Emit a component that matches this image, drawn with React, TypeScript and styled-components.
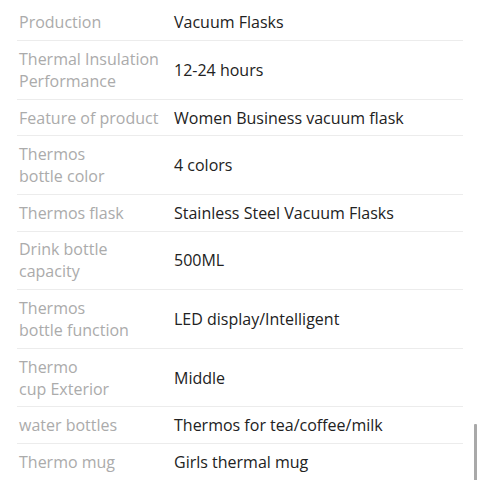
import React from "react";
import styled, { createGlobalStyle } from "styled-components";

const Global = createGlobalStyle`
  html, body { margin: 0; padding: 0; background: #fff; }
  body { font-family: "Open Sans", "Noto Sans", sans-serif; overflow: hidden; }
`;

const Page = styled.div`
  width: 480px;
  height: 480px;
  overflow: hidden;
  position: relative;
  padding: 4.6px 17px 0 17px;
  box-sizing: border-box;
`;

const Table = styled.div`
  display: flex;
  flex-direction: column;
`;

const Row = styled.div`
  display: grid;
  grid-template-columns: 155px 1fr;
  align-items: center;
  padding: 6.8px 0 6.8px 2px;
  border-bottom: 1px solid #ececec;
  font-size: 16px;
  line-height: 22px;
`;

const Label = styled.div`
  color: #ababab;
`;

const Value = styled.div`
  color: #222;
`;

const ScrollThumb = styled.div`
  position: absolute;
  right: 3px;
  top: 424px;
  width: 3px;
  height: 60px;
  background: #a9a9a9;
  border-radius: 1px;
`;

const rows: [string[], string][] = [
  [["Production"], "Vacuum Flasks"],
  [["Thermal Insulation", "Performance"], "12-24 hours"],
  [["Feature of product"], "Women Business vacuum flask"],
  [["Thermos", "bottle color"], "4 colors"],
  [["Thermos flask"], "Stainless Steel Vacuum Flasks"],
  [["Drink bottle", "capacity"], "500ML"],
  [["Thermos", "bottle function"], "LED display/Intelligent"],
  [["Thermo", "cup Exterior"], "Middle"],
  [["water bottles"], "Thermos for tea/coffee/milk"],
  [["Thermo mug"], "Girls thermal mug"],
];

export default function App() {
  return (
    <>
      <Global />
      <Page>
        <Table>
          {rows.map(([label, value], i) => (
            <Row key={i}>
              <Label>
                {label.map((l, j) => (
                  <div key={j}>{l}</div>
                ))}
              </Label>
              <Value>{value}</Value>
            </Row>
          ))}
        </Table>
        <ScrollThumb />
      </Page>
    </>
  );
}
